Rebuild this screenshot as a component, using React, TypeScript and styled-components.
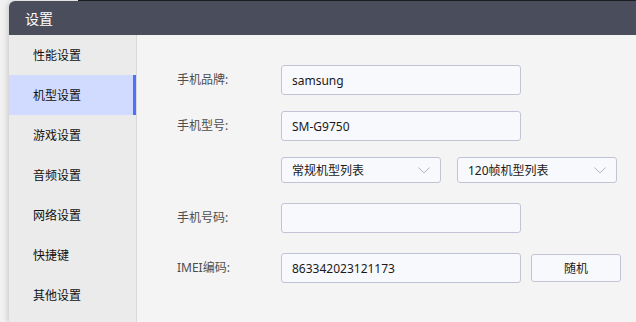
import React from 'react'
import styled, { createGlobalStyle } from 'styled-components'

const GlobalStyle = createGlobalStyle`
  html, body {
    margin: 0;
    padding: 0;
    background: #f1f1f1;
    overflow: hidden;
  }
  body {
    font-family: "Noto Sans", "Noto Sans CJK SC", sans-serif;
  }
`

const Page = styled.div`
  width: 636px;
  height: 322px;
  display: flex;
  flex-direction: column;
`

const TopEdge = styled.div`
  height: 1px;
  margin-left: 78px;
  background: #1e1f24;
  flex-shrink: 0;
`

const Window = styled.div`
  flex: 1;
  margin-left: 9px;
  display: flex;
  flex-direction: column;
  border-radius: 6px 0 0 0;
  overflow: hidden;
  box-shadow: -2px 0 5px rgba(0, 0, 0, 0.14);
`

const TitleBar = styled.div`
  height: 34px;
  flex-shrink: 0;
  background: #4a4d5c;
  color: #fff;
  font-size: 14px;
  display: flex;
  align-items: center;
  padding-left: 16px;
`

const Body = styled.div`
  flex: 1;
  display: flex;
`

const Sidebar = styled.div`
  width: 127px;
  background: #ebebeb;
  border-right: 1px solid #d9d9d9;
  display: flex;
  flex-direction: column;
`

const NavItem = styled.div<{ $active?: boolean }>`
  height: 40px;
  display: flex;
  align-items: center;
  padding-left: 24px;
  font-size: 12px;
  color: #111;
  background: ${p => (p.$active ? '#d0dbff' : 'transparent')};
  box-shadow: ${p => (p.$active ? 'inset -3px 0 0 #4f70f8' : 'none')};
`

const Content = styled.div`
  flex: 1;
  background: #f4f4f4;
  padding: 30px 0 0 40px;
  display: flex;
  flex-direction: column;
  gap: 16px;
`

const Row = styled.div<{ $extra?: number }>`
  display: flex;
  align-items: center;
  height: 30px;
  margin-top: ${p => p.$extra ?? 0}px;
`

const Label = styled.div`
  width: 104px;
  font-size: 12px;
  color: #4d4d4d;
  margin-top: -3px;
`

const Input = styled.div`
  width: 240px;
  height: 30px;
  box-sizing: border-box;
  border: 1px solid #c3c3d6;
  border-radius: 3px;
  background: #f8f9fd;
  padding-left: 10px;
  display: flex;
  align-items: center;
  font-size: 12px;
  color: #1a1a1a;
`

const Selects = styled.div`
  display: flex;
  gap: 16px;
  align-self: flex-start;
`

const Select = styled.div`
  width: 160px;
  height: 26px;
  box-sizing: border-box;
  border: 1px solid #c3c3d6;
  border-radius: 3px;
  background: #f8f9fd;
  padding: 0 10px;
  display: flex;
  align-items: center;
  justify-content: space-between;
  font-size: 12px;
  color: #1a1a1a;
`

const Button = styled.button`
  margin-left: 10px;
  width: 90px;
  height: 28px;
  box-sizing: border-box;
  border: 1px solid #c3c3d6;
  border-radius: 3px;
  background: #f8f9fd;
  font-family: inherit;
  font-size: 12px;
  color: #1a1a1a;
  padding: 0;
`

const Chevron = () => (
  <svg width="12" height="7" viewBox="0 0 12 7">
    <path d="M0.5 0.5 L6 6 L11.5 0.5" fill="none" stroke="#b5b5c2" strokeWidth="1" />
  </svg>
)

const navs = ['性能设置', '机型设置', '游戏设置', '音频设置', '网络设置', '快捷键', '其他设置']

export default function App() {
  return (
    <>
      <GlobalStyle />
      <Page>
        <TopEdge />
        <Window>
          <TitleBar>设置</TitleBar>
          <Body>
            <Sidebar>
              {navs.map(n => (
                <NavItem key={n} $active={n === '机型设置'}>{n}</NavItem>
              ))}
            </Sidebar>
            <Content>
              <Row>
                <Label>手机品牌:</Label>
                <Input>samsung</Input>
              </Row>
              <Row>
                <Label>手机型号:</Label>
                <Input>SM-G9750</Input>
              </Row>
              <Row>
                <Label />
                <Selects>
                  <Select>常规机型列表<Chevron /></Select>
                  <Select>120帧机型列表<Chevron /></Select>
                </Selects>
              </Row>
              <Row>
                <Label>手机号码:</Label>
                <Input />
              </Row>
              <Row $extra={4}>
                <Label>IMEI编码:</Label>
                <Input>863342023121173</Input>
                <Button>随机</Button>
              </Row>
            </Content>
          </Body>
        </Window>
      </Page>
    </>
  )
}
